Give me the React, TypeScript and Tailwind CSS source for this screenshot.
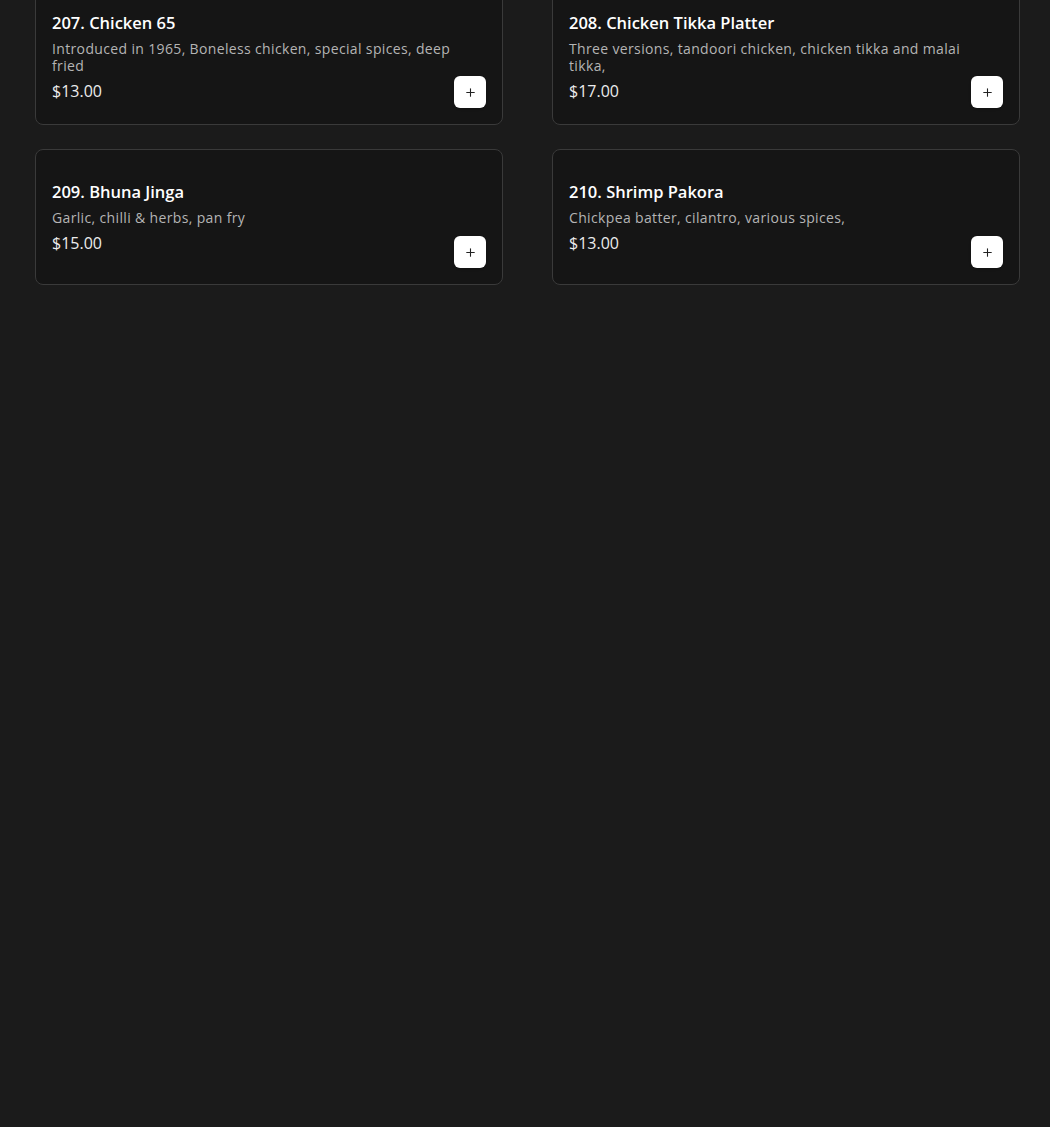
import { Plus } from "lucide-react";

type Dish = {
  id: number;
  name: string;
  description: string;
  price: string;
};

const dishes: Dish[] = [
  {
    id: 207,
    name: "Chicken 65",
    description: "Introduced in 1965, Boneless chicken, special spices, deep fried",
    price: "$13.00",
  },
  {
    id: 208,
    name: "Chicken Tikka Platter",
    description: "Three versions, tandoori chicken, chicken tikka and malai tikka,",
    price: "$17.00",
  },
  {
    id: 209,
    name: "Bhuna Jinga",
    description: "Garlic, chilli & herbs, pan fry",
    price: "$15.00",
  },
  {
    id: 210,
    name: "Shrimp Pakora",
    description: "Chickpea batter, cilantro, various spices,",
    price: "$13.00",
  },
];

const DishCard = ({ dish }: { dish: Dish }) => (
  <div className="flex min-h-[136px] items-center justify-between rounded-lg border border-[#3a3a3a] bg-[#151515] p-4">
    <div className="min-w-0 flex-1">
      <h3 className="text-[16.5px] font-semibold leading-6 text-white">
        {dish.id}. {dish.name}
      </h3>
      <p className="mt-[5px] text-[14px] leading-[17px] tracking-[0.35px] text-[#b4b4b4]">
        {dish.description}
      </p>
      <p className="mt-[5px] text-[16px] leading-6 text-[#ececec]">{dish.price}</p>
    </div>
    <button
      type="button"
      className="flex h-8 w-8 shrink-0 self-end items-center justify-center rounded-md bg-white text-[#222] shadow-sm"
    >
      <Plus size={13} strokeWidth={2} />
    </button>
  </div>
);

export default function App() {
  return (
    <div
      className="h-[1127px] overflow-hidden bg-[#1b1b1b] pl-[35px] pr-[30px]"
      style={{ fontFamily: '"Open Sans", "Noto Sans", sans-serif' }}
    >
      <div className="-mt-[11px] grid grid-cols-[468px_468px] gap-x-[49px] gap-y-[24px]">
        {dishes.map((dish) => (
          <DishCard key={dish.id} dish={dish} />
        ))}
      </div>
    </div>
  );
}
